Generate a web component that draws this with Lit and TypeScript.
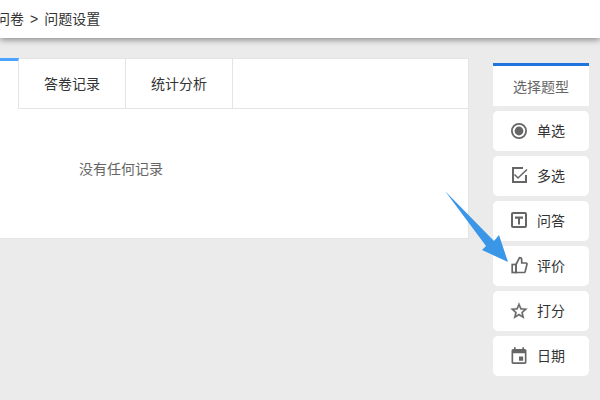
import { LitElement, html, css, svg } from "lit";
import { customElement } from "lit/decorators.js";

const icons: Record<string, unknown> = {
  radio: svg`<circle cx="10" cy="10" r="7.1" fill="none" stroke="#666" stroke-width="1.8"/><circle cx="10" cy="10" r="4.4" fill="#666"/>`,
  check: svg`<path d="M17 9v7H4V2h10" fill="none" stroke="#666" stroke-width="2"/><path d="M5.500 8.500L9 12L18 3.500" fill="none" stroke="#666" stroke-width="1.600"/>`,
  text: svg`<rect x="3" y="2" width="14" height="14" rx="1" fill="none" stroke="#666" stroke-width="2"/><path d="M6 5.500h8v2.200h-3V13.500H9V7.700H6z" fill="#666"/>`,
  thumb: svg`<rect x="3.200" y="8.500" width="3.800" height="8" fill="none" stroke="#666" stroke-width="1.700"/><path d="M7 8.500L10.500 1.700c1.300 0 2.200.9 2.200 2.100V7H17c.7 0 1.100.5 1 1.100L16.200 15.500c-.2.700-.6 1-1.200 1H7z" fill="none" stroke="#666" stroke-width="1.700" stroke-linejoin="round"/>`,
  star: svg`<path transform="scale(.8333)" d="M22 9.240l-7.190-.620L12 2 9.190 8.630 2 9.240l5.460 4.730L5.820 21 12 17.270 18.180 21l-1.630-7.030L22 9.240zM12 15.400l-3.760 2.270 1-4.280-3.320-2.880 4.380-.380L12 6.100l1.710 4.040 4.380.380-3.320 2.880 1 4.280L12 15.400z" fill="#666" stroke="#666" stroke-width=".4"/>`,
  date: svg`<path transform="translate(0 .5) scale(.8333)" d="M17 12h-5v5h5v-5zM16 1v2H8V1H6v2H5c-1.110 0-1.990.9-1.990 2L3 19c0 1.100.89 2 2 2h14c1.100 0 2-.9 2-2V5c0-1.100-.9-2-2-2h-1V1h-2zm3 18H5V8h14v11z" fill="#666"/>`,
};

const types = [
  ["radio", "单选"],
  ["check", "多选"],
  ["text", "问答"],
  ["thumb", "评价"],
  ["star", "打分"],
  ["date", "日期"],
];

@customElement("app-root")
export class AppRoot extends LitElement {
  static styles = css`
    :host {
      display: block;
      position: relative;
      width: 600px;
      height: 400px;
      overflow: hidden;
      background: #ebebeb;
      font-family: "Noto Sans CJK SC", "Liberation Sans", sans-serif;
      font-size: 14px;
      color: #333;
    }
    .topbar {
      height: 38px;
      background: #fff;
      box-shadow: 0 2px 6px rgba(0, 0, 0, 0.4);
      display: flex;
      align-items: center;
      white-space: nowrap;
      position: relative;
    }
    .crumb {
      margin: -3px 0 0 -4px;
    }
    .crumb .sep {
      font-family: "Liberation Sans", sans-serif;
      margin: 0 6px;
    }
    .content {
      display: flex;
      align-items: flex-start;
      padding-top: 20px;
    }
    .panel {
      width: 469px;
      height: 181px;
      box-sizing: border-box;
      background: #fff;
      border-right: 1px solid #e4e4e4;
      border-bottom: 1px solid #e4e4e4;
      flex: none;
    }
    .tabs {
      display: flex;
      height: 51px;
      box-sizing: border-box;
      border-bottom: 1px solid #e4e4e4;
      border-top: 1px solid #e4e4e4;
    }
    .tab-active {
      width: 19px;
      flex: none;
      box-sizing: border-box;
      border-top: 3px solid #4ba3ff;
      margin-top: -1px;
      border-right: 1px solid #e4e4e4;
      height: 51px;
      background: #fff;
    }
    .tab {
      width: 107px;
      flex: none;
      box-sizing: border-box;
      border-right: 1px solid #e4e4e4;
      display: flex;
      align-items: center;
      justify-content: center;
      padding-bottom: 1px;
    }
    .empty {
      margin: 49px 0 0 79px;
      color: #666;
      line-height: 20px;
    }
    .side {
      width: 96px;
      margin: 5px 0 0 24px;
      flex: none;
      display: flex;
      flex-direction: column;
      gap: 5px;
    }
    .side-head {
      height: 43px;
      box-sizing: border-box;
      background: #fff;
      border-top: 3px solid #1f74e0;
      color: #666;
      display: flex;
      align-items: center;
      justify-content: center;
    }
    .item {
      height: 40px;
      background: #fff;
      border-radius: 5px;
      display: flex;
      align-items: center;
      padding-left: 16px;
      gap: 8px;
    }
    .item svg {
      width: 20px;
      height: 20px;
      flex: none;
    }
    .item span {
      margin-top: -2px;
    }
    .arrow {
      position: absolute;
      left: 0;
      top: 0;
      width: 600px;
      height: 400px;
      pointer-events: none;
    }
  `;

  render() {
    return html`
      <div class="topbar">
        <div class="crumb">问卷<span class="sep">&gt;</span>问题设置</div>
      </div>
      <div class="content">
        <div class="panel">
          <div class="tabs">
            <div class="tab-active"></div>
            <div class="tab">答卷记录</div>
            <div class="tab">统计分析</div>
          </div>
          <div class="empty">没有任何记录</div>
        </div>
        <div class="side">
          <div class="side-head">选择题型</div>
          ${types.map(
            ([icon, label]) => html`
              <div class="item">
                <svg viewBox="0 0 20 20">${icons[icon]}</svg>
                <span>${label}</span>
              </div>
            `
          )}
        </div>
      </div>
      <svg class="arrow" viewBox="0 0 600 400">
        <path d="M445 191L494 241L499 235L508 262L482 250L486 246Z" fill="#3a97e8" />
      </svg>
    `;
  }
}
